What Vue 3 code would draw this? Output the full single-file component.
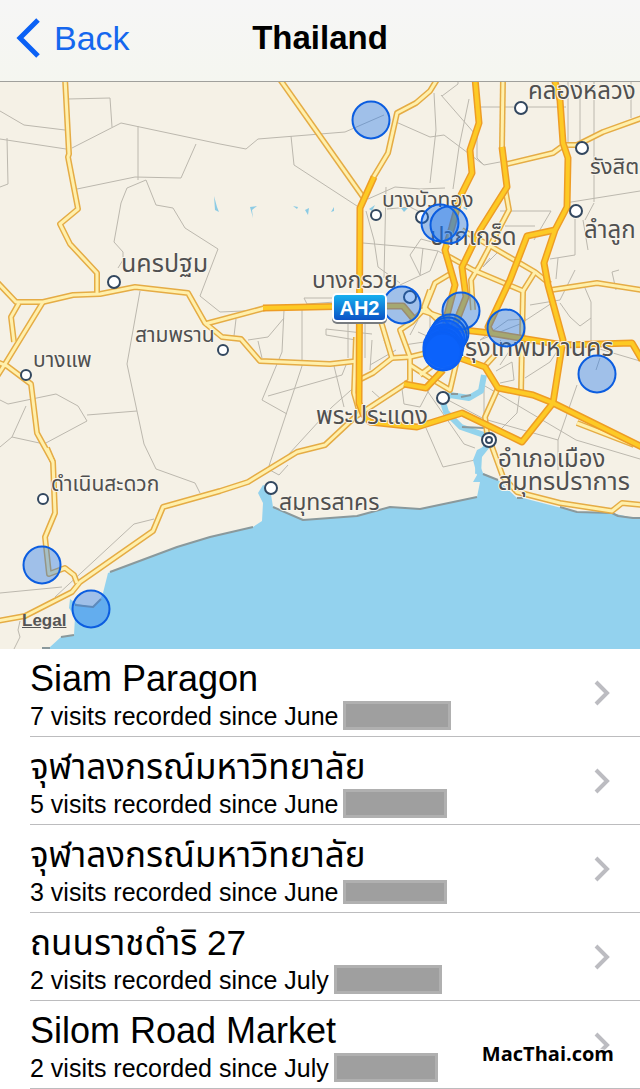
<script setup>
const lanes = [
  'M0 111 L24 125 L65 130', 'M0 139 L66 149', 'M7 138 L8 184 L0 187', 'M68 99 L110 98 L112 127',
  'M72 148 L121 123 L220 144 L246 149 L258 139 L345 132 L384 115', 'M138 126 V180', 'M77 189 L135 177 L181 178 L196 144',
  'M118 268 L123 260 L123 252 L114 242 L121 203 L127 188 L146 180 L156 205 L173 208 L185 228 L218 249 L200 296 L220 312 L290 309',
  'M140 291 L127 364 L144 444 L156 469 L195 483 L200 493', 'M87 415 L137 411',
  'M0 400 L8 404 L56 394 L78 406 L87 421 L44 444 L12 437 L0 447', 'M26 406 L12 437',
  'M0 593 L62 587', 'M55 597 L134 524 L154 519', 'M20 621 L18 630 L20 637 L14 649',
  'M291 136 L294 165 L357 206', 'M302 308 V366 L268 469', 'M284 310 L282 352 L262 400 L287 414', 'M236 319 L234 336', 'M248 340 L268 337 L284 318',
  'M268 396 L342 375 L348 360', 'M258 341 L262 358', 'M334 366 L344 407', 'M304 298 L307 304 L335 302', 'M304 298 H335', 'M326 329 L372 334 M326 335 L362 341 M326 329 V335',
  'M368 199 L395 187 L420 189 L445 188', 'M366 211 L374 240 L378 267 L400 283', 'M386 187 L384 278', 'M387 209 L410 207 L420 212', 'M363 243 L420 248 L438 251 L480 274',
  'M348 307 V358', 'M396 122 L430 137 L444 135 L484 165 L500 162', 'M434 93 L436 130 L430 183', 'M442 96 L458 84 L458 80', 'M441 95 L475 134',
  'M469 99 L459 147 L453 189', 'M474 107 H566', 'M568 80 V142', 'M580 80 V140', 'M594 80 V202', 'M631 80 V118',
  'M565 203 L640 191', 'M575 219 L575 255 L550 259', 'M583 220 L588 250', 'M500 211 H551 L534 240', 'M505 226 H535', 'M490 258 L483 267 L498 252', 'M477 134 L477 158 L484 165', 'M594 203 L585 220',
  'M423 248 L420 275 L410 255 L421 239 L432 242', 'M438 251 L430 271 L400 285', 'M556 279 L558 258',
  'M585 288 L591 302 V343', 'M552 303 L520 324 L480 340', 'M560 303 L570 317 L580 326 L591 318', 'M480 340 L508 320 L526 319', 'M575 270 L560 300 L530 305',
  'M596 370 L600 358', 'M596 348 L640 361', 'M577 385 L558 440 V470', 'M485 386 L576 440 L640 459', 'M520 390 L517 413 L500 430', 'M525 378 L550 362 L558 350',
  'M496 371 L512 362 L514 380 L500 383', 'M448 400 L484 419 L558 440', 'M484 386 V420', 'M426 389 L464 444 L475 448', 'M426 428 L443 467 L475 460',
  'M288 455 L332 407 L359 383', 'M370 365 L396 350', 'M372 340 L370 370 M384 340 L388 350 M365 310 V358', 'M372 391 L382 400', 'M402 389 L404 404 L420 407 L430 388',
  'M268 469 L279 475 L288 465', 'M418 320 L410 335 M430 315 V328 M418 332 L438 341 M404 345 L424 342', 'M500 340 L510 350 L500 365', 'M616 290 L612 272 L619 270',
]
const avenues = [
  'M65 78 L69 154 L68 157 L78 209 L60 224 L70 244 L97 273 L97 294',
  'M-3 282 L16 302 L43 302 L73 295 L100 294 L135 287 L188 293 L205 323 L222 337 L241 339 L260 361 L330 364 L357 361',
  'M19 303 L11 317 L14 342', 'M43 302 L5 364 L-4 378',
  'M-3 362 L7 366 L31 384 L37 433 L53 462',
  'M47 448 L53 462 L55 513 L45 537 L49 574 L65 568 L74 575 L77 583',
  'M-3 621 L25 616 L72 592 L80 582 L153 531 L163 507 L220 491 L248 482 L297 452 L325 445 L355 417 L410 381',
  'M205 324 L265 308', 'M279 78 L363 197', 'M438 78 L430 91 L416 103 L397 113 L388 153 L373 178',
  'M503 78 L502 148', 'M507 164 L553 153 L564 145 L577 145 L603 132 L642 118',
  'M505 188 L509 210 L480 265 L471 280 L473 310', 'M462 230 L487 244 L535 272 L550 284', 'M448 256 L473 270 L523 291 L535 272',
  'M523 291 L521 393', 'M551 290 L597 283 L642 290', 'M577 423 L634 445', 'M495 355 L485 366',
  'M498 388 L485 417 L487 433 L503 477 L517 492 L560 503 L612 511 L622 503 L642 505',
  'M450 274 L435 283 L425 308 L412 322 L400 330 L410 357 L410 382', 'M420 310 L450 320',
  'M380 318 L392 358 L373 373 L361 379', 'M392 358 L410 357 L435 351', 'M410 365 L430 378 L450 390 L457 360',
  'M356 337 L354 393 L360 414', 'M462 307 L452 330 M430 290 L424 307 L440 322', 'M420 375 L440 360',
]
const highways = [
  'M263 308 L360 306 L403 306 L413 318', 'M374 177 L360 208 L359 403 L363 414 L370 422 L417 427 L462 413 L522 442 L553 403',
  'M475 78 L479 123 L470 150 L472 173 L460 197 L452 227 L445 250 L455 285 L447 315 L443 345',
  'M502 147 L507 187 L480 230 L462 267 L466 297 L457 320 L445 345',
  'M554 78 L560 100 L563 143 L568 158 L567 207 L555 230 L544 263 L548 285 L563 340 L553 403',
  'M555 230 L527 236 L510 280 L488 327 L492 334', 'M455 329 L490 333 L520 338 L563 345 L632 343 L642 360',
  'M460 358 L485 367 L498 388 L533 395 L553 403 L642 447', 'M404 384 L426 388 L443 370',
]
const river = 'M484 375 L481 391 L469 398 L450 395 L443 402 L446 412 L461 427 L487 436 L487 446 L479 456 L478 474'
const sea = 'M42 649 L50 647 L61 637 L74 635 L75 617 L69 608 L70 599 L77 604 L93 607 L100 600 L103 593 L108 573 L177 547 L210 537 L253 527 L262 521 L263 503 L258 493 L263 485 L270 488 L273 507 L303 520 L357 516 L390 507 L420 509 L477 497 L480 482 L473 482 L477 475 L473 460 L477 450 L487 445 L479 463 L483 473 L498 480 L517 498 L523 498 L577 512 L612 513 L633 518 L640 518 V649 Z'
const shores = ['M42 648 H50 M61 637 L74 635', 'M75 605 L93 607 L101 599', 'M110 572 L177 547 L210 537 L253 527', 'M273 507 L303 520 L357 516 L390 507 L420 509 L477 497', 'M483 474 L498 480 M517 498 L523 498 M560 507 L577 512 L612 513 L618 516 L633 518 L640 518', 'M451 394 H458 M461 397 L471 395 M462 427 L484 428']
const ponds = ['M214 196 L217 207 L219 212 L215 210 Z', 'M250 207 L257 206 L252 210 L253 218 Z', 'M293 206 L298 207 L297 209 Z', 'M305 210 L309 208 L308 215 Z', 'M331 212 L334 207 L334 211 Z', 'M369 209 L375 205 L372 211 Z', 'M401 208 H408 L404 212 Z', 'M463 208 L468 204 L467 210 Z']
const towns = [[114, 282, 6], [223, 350, 5], [26, 375, 5], [43, 499, 5], [271, 488, 6], [443, 398, 6], [376, 215, 5], [422, 217, 6], [521, 108, 6], [582, 148, 6], [576, 211, 6], [410, 297, 6]]
const labels = [
  ['คลองหลวง', 528, 99, 24], ['รังสิต', 590, 174, 22], ['ลำลูก', 584, 238, 24], ['บางบัวทอง', 382, 207, 21],
  ['ปากเกร็ด', 430, 245, 24], ['นครปฐม', 121, 272, 25], ['บางกรวย', 312, 288, 23], ['สามพราน', 135, 342, 21],
  ['บางแพ', 33, 367, 21], ['กรุงเทพมหานคร', 450, 356, 25], ['พระประแดง', 316, 424, 24], ['อำเภอเมือง', 498, 467, 24],
  ['สมุทรปราการ', 498, 490, 25], ['ดำเนินสะดวก', 51, 491, 21], ['สมุทรสาคร', 279, 510, 23],
]
const visits = [
  [371, 120], [440, 223], [449, 225], [402, 305], [461, 311], [506, 328], [597, 374], [42, 565], [91, 609],
  [450, 333], [448, 336],
]
const frequentVisits = [[446, 339], [444, 343], [445, 345], [442, 347], [444, 349], [442, 351], [443, 352]]
const places = [
  { name: 'Siam Paragon', note: '7 visits recorded since June', size: 'wide' },
  { name: 'จุฬาลงกรณ์มหาวิทยาลัย', thai: true, note: '5 visits recorded since June', size: 'narrow' },
  { name: 'จุฬาลงกรณ์มหาวิทยาลัย', thai: true, note: '3 visits recorded since June', size: 'short' },
  { name: 'ถนนราชดำริ 27', thai: true, note: '2 visits recorded since July', size: 'wide' },
  { name: 'Silom Road Market', note: '2 visits recorded since July', size: 'narrow' },
]
</script>

<template>
  <div class="screen">
    <header class="bar">
      <button type="button" class="back">
        <svg width="24" height="40" viewBox="0 0 24 40" aria-hidden="true"><path d="M22 2 L4 20 L22 38" /></svg>
        <span>Back</span>
      </button>
      <h1>Thailand</h1>
    </header>

    <section class="map">
      <svg viewBox="0 82 640 567" role="img" aria-label="Map of visited places">
        <defs>
          <linearGradient id="shield" x1="0" y1="0" x2="0" y2="1">
            <stop offset="0" stop-color="#18b3f0" /><stop offset="1" stop-color="#0b4fc4" />
          </linearGradient>
        </defs>
        <rect class="land" y="82" width="640" height="567" />
        <path v-for="d in lanes" :key="d" class="lane" :d="d" />
        <path v-for="d in ponds" :key="d" class="pond" :d="d" />
        <path class="river" :d="river" />
        <path class="sea" :d="sea" />
        <path v-for="d in shores" :key="d" class="shore" :d="d" />
        <path v-for="d in avenues" :key="'c' + d" class="avenue-edge" :d="d" />
        <path v-for="d in avenues" :key="d" class="avenue" :d="d" />
        <path v-for="d in highways" :key="'c' + d" class="highway-edge" :d="d" />
        <path v-for="d in highways" :key="d" class="highway" :d="d" />
        <circle v-for="t in towns" :key="t.join()" class="town" :cx="t[0]" :cy="t[1]" :r="t[2]" />
        <circle class="town" cx="489" cy="440" r="7" />
        <circle class="town" cx="489" cy="440" r="3" />
        <text v-for="l in labels" :key="l[0]" class="label" :x="l[1]" :y="l[2]" :font-size="l[3]">{{ l[0] }}</text>
        <circle v-for="v in visits" :key="v.join()" class="visit" :cx="v[0]" :cy="v[1]" r="18.5" />
        <circle v-for="v in frequentVisits" :key="v.join()" class="visit frequent" :cx="v[0]" :cy="v[1]" r="18.5" />
        <g>
          <rect class="shield-shadow" x="332" y="294" width="55" height="30" rx="5" />
          <rect class="shield" x="333" y="294" width="53" height="27" rx="4" />
          <text class="shield-text" x="359.5" y="315">AH2</text>
        </g>
      </svg>
      <a href="#legal" class="legal">Legal</a>
    </section>

    <main class="list">
      <ul>
        <li v-for="(p, i) in places" :key="i">
          <a :href="'#place-' + i" class="row">
            <div class="text">
              <div class="name" :class="{ thai: p.thai }">{{ p.name }}</div>
              <div class="note">{{ p.note }}<span class="mask" :class="p.size"></span></div>
            </div>
            <svg class="chevron" width="18" height="28" viewBox="0 0 18 28" aria-hidden="true"><path d="M3 3 L14 14 L3 25" /></svg>
          </a>
        </li>
      </ul>
      <div class="credit">MacThai.com</div>
    </main>
  </div>
</template>

<style>
body { background: #fff; }
</style>

<style scoped>
.screen { font-family: "Liberation Sans", "Noto Sans Thai", "Noto Sans", sans-serif; color: #000; overflow: hidden; }
.bar { display: grid; grid-template-columns: 1fr auto 1fr; align-items: center; height: 82px; padding: 0 16px 6px; box-sizing: border-box; background: linear-gradient(#f6f6f6, #f5f6f0); border-bottom: 1px solid #a0a09c; }
.back { display: flex; align-items: center; gap: 14px; justify-self: start; padding: 0; border: 0; background: none; color: #1567ee; font: inherit; font-size: 34px; line-height: 40px; }
.back path { fill: none; stroke: #0b61f5; stroke-width: 5; }
h1 { margin: 0; font-size: 33px; line-height: 40px; font-weight: bold; }
.map { position: relative; }
.map svg { display: block; width: 100%; height: auto; }
.land { fill: #f5f1e6; }
.map path { fill: none; stroke-linejoin: round; }
.map .lane { stroke: #bcb8ae; stroke-width: 1; }
.map .pond { fill: #8ccbe4; }
.map .river { stroke: #93d3ec; stroke-width: 6; }
.map .sea { fill: #93d2ee; }
.map .shore { stroke: #8a999c; stroke-width: 2; }
.map .avenue-edge { stroke: #e5ac45; stroke-width: 6; }
.map .avenue { stroke: #fff0ac; stroke-width: 3; }
.map .highway-edge { stroke: #ee9d25; stroke-width: 7; }
.map .highway { stroke: #fdca25; stroke-width: 4; }
.town { fill: #fff; stroke: #32475f; stroke-width: 2; }
.label { fill: #505050; stroke: #f8f5ec; stroke-width: 2; paint-order: stroke; stroke-linejoin: round; }
.visit { fill: #1470f0; fill-opacity: 0.38; stroke: #0b5de0; stroke-width: 2; }
.frequent { fill: #0b62fb; fill-opacity: 0.7; stroke: #0a5ff5; }
.shield-shadow { fill: #787c80; }
.shield { fill: url(#shield); stroke: #fff; stroke-width: 2; }
.shield-text { fill: #fff; font-size: 20px; font-weight: bold; text-anchor: middle; }
.legal { position: absolute; left: 22px; bottom: 18px; color: #555; font-size: 17px; line-height: 20px; font-weight: bold; }
.list { position: relative; }
ul { list-style: none; margin: 0; padding: 0 0 0 30px; }
li { border-bottom: 1px solid #bcbcbe; }
.row { display: flex; align-items: center; justify-content: space-between; height: 87px; padding-right: 29px; color: inherit; text-decoration: none; }
.text { padding-top: 2px; }
.name { font-size: 36px; line-height: 44px; white-space: nowrap; }
.thai { font-size: 35px; }
.note { display: flex; align-items: center; height: 30px; font-size: 25px; line-height: 30px; white-space: nowrap; }
.mask { box-sizing: border-box; margin-left: 5px; background: #9f9f9f; border: 3px solid #b0b0b0; }
.wide { width: 108px; height: 29px; }
.narrow { width: 104px; height: 29px; }
.short { width: 104px; height: 24px; }
.chevron path { fill: none; stroke: #bcbcc1; stroke-width: 4; }
.credit { position: absolute; right: 26px; bottom: 22px; font-family: "Open Sans", "Noto Sans", sans-serif; font-size: 20px; line-height: 26px; font-weight: bold; text-shadow: 0 0 2px #fff, 0 0 2px #fff, 1px 1px 1px #fff, -1px -1px 1px #fff; }
</style>
